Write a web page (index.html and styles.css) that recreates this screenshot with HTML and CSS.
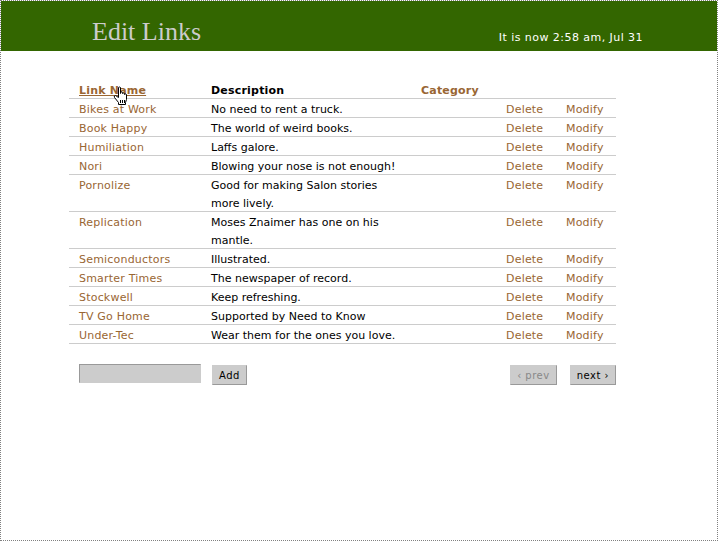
FILE: index.html
```html
<!DOCTYPE html>
<html>
<head>
<meta charset="utf-8">
<title>Edit Links</title>
<link rel="stylesheet" href="styles.css">
</head>
<body>
<div class="frame">
  <header class="top">
    <h1 class="title">Edit Links</h1>
    <div class="now">It is now 2:58 am, Jul 31</div>
  </header>
  <main class="content">
    <div class="table-wrap">
      <table class="links">
        <colgroup>
          <col class="c-name"><col class="c-desc"><col class="c-cat"><col class="c-del"><col class="c-mod">
        </colgroup>
        <thead>
          <tr>
            <th><span class="cell"><a class="sort" href="#">Link Name</a></span></th>
            <th class="plain"><span class="cell">Description</span></th>
            <th><span class="cell">Category</span></th>
            <th></th>
            <th></th>
          </tr>
        </thead>
        <tbody>
          <tr><td><span class="cell"><a href="#">Bikes at Work</a></span></td><td><span class="cell">No need to rent a truck.</span></td><td></td><td><span class="cell"><a href="#">Delete</a></span></td><td><span class="cell"><a href="#">Modify</a></span></td></tr>
          <tr><td><span class="cell"><a href="#">Book Happy</a></span></td><td><span class="cell">The world of weird books.</span></td><td></td><td><span class="cell"><a href="#">Delete</a></span></td><td><span class="cell"><a href="#">Modify</a></span></td></tr>
          <tr><td><span class="cell"><a href="#">Humiliation</a></span></td><td><span class="cell">Laffs galore.</span></td><td></td><td><span class="cell"><a href="#">Delete</a></span></td><td><span class="cell"><a href="#">Modify</a></span></td></tr>
          <tr><td><span class="cell"><a href="#">Nori</a></span></td><td><span class="cell">Blowing your nose is not enough!</span></td><td></td><td><span class="cell"><a href="#">Delete</a></span></td><td><span class="cell"><a href="#">Modify</a></span></td></tr>
          <tr><td><span class="cell"><a href="#">Pornolize</a></span></td><td><span class="cell">Good for making Salon stories more lively.</span></td><td></td><td><span class="cell"><a href="#">Delete</a></span></td><td><span class="cell"><a href="#">Modify</a></span></td></tr>
          <tr><td><span class="cell"><a href="#">Replication</a></span></td><td><span class="cell">Moses Znaimer has one on his mantle.</span></td><td></td><td><span class="cell"><a href="#">Delete</a></span></td><td><span class="cell"><a href="#">Modify</a></span></td></tr>
          <tr><td><span class="cell"><a href="#">Semiconductors</a></span></td><td><span class="cell">Illustrated.</span></td><td></td><td><span class="cell"><a href="#">Delete</a></span></td><td><span class="cell"><a href="#">Modify</a></span></td></tr>
          <tr><td><span class="cell"><a href="#">Smarter Times</a></span></td><td><span class="cell">The newspaper of record.</span></td><td></td><td><span class="cell"><a href="#">Delete</a></span></td><td><span class="cell"><a href="#">Modify</a></span></td></tr>
          <tr><td><span class="cell"><a href="#">Stockwell</a></span></td><td><span class="cell">Keep refreshing.</span></td><td></td><td><span class="cell"><a href="#">Delete</a></span></td><td><span class="cell"><a href="#">Modify</a></span></td></tr>
          <tr><td><span class="cell"><a href="#">TV Go Home</a></span></td><td><span class="cell">Supported by Need to Know</span></td><td></td><td><span class="cell"><a href="#">Delete</a></span></td><td><span class="cell"><a href="#">Modify</a></span></td></tr>
          <tr><td><span class="cell"><a href="#">Under-Tec</a></span></td><td><span class="cell">Wear them for the ones you love.</span></td><td></td><td><span class="cell"><a href="#">Delete</a></span></td><td><span class="cell"><a href="#">Modify</a></span></td></tr>
        </tbody>
      </table>
      <svg class="cursor" width="17" height="19" viewBox="0 0 17 19" aria-hidden="true">
        <path d="M5.5 1.5 Q6.5 0.5 7.5 1.5 L7.5 7.5 L7.5 6.5 Q8.5 5.5 9.5 6.5 L9.5 7.5 Q10.5 6.5 11.5 7.5 L11.5 8.5 Q12.5 7.5 13.5 8.5 L13.5 13.5 L12.5 16.5 L12.5 18.5 L5.5 18.5 L5.5 16.5 L1.5 11.5 Q0.5 9.5 2.5 9.5 L5.5 11.5 Z" fill="#fff" stroke="#000" stroke-width="1"/>
        <path d="M7.5 14 V17 M9.5 14 V17 M11.5 14 V17" stroke="#000" stroke-width="1" fill="none"/>
      </svg>
    </div>
    <div class="controls">
      <div class="add">
        <input class="field" type="text" aria-label="New link">
        <button class="btn" type="button">Add</button>
      </div>
      <div class="pager">
        <button class="btn off" type="button">&lsaquo; prev</button>
        <button class="btn" type="button">next &rsaquo;</button>
      </div>
    </div>
  </main>
</div>
</body>
</html>
```

FILE: styles.css
```css
html, body {
  margin: 0;
  padding: 0;
  background: #fff;
}

.frame {
  width: 718px;
  height: 541px;
  box-sizing: border-box;
  border: 1px dotted #808080;
  font-family: "DejaVu Sans", Verdana, sans-serif;
  font-size: 11px;
  color: #000;
}

.top {
  height: 50px;
  background: #336600;
  display: flex;
  align-items: flex-start;
  justify-content: space-between;
  padding: 0 74px 0 91px;
  box-sizing: border-box;
}

.title {
  margin: 0;
  padding-top: 16px;
  font-family: "Liberation Serif", "Times New Roman", serif;
  font-weight: normal;
  font-size: 26px;
  line-height: 30px;
  color: #cccccc;
}

.now {
  padding-top: 30px;
  line-height: 14px;
  color: #fff;
  font-size: 11px;
  letter-spacing: 0.45px;
}

.content {
  padding: 29px 0 0 68px;
}

.table-wrap {
  position: relative;
  width: 547px;
}

.links {
  width: 547px;
  border-collapse: collapse;
  table-layout: fixed;
}

.c-name { width: 132px; }
.c-desc { width: 210px; }
.c-cat { width: 85px; }
.c-del { width: 60px; }
.c-mod { width: 60px; }

.links th,
.links td {
  padding: 0 0 0 10px;
  line-height: 18px;
  text-align: left;
  vertical-align: top;
  border-bottom: 1px solid #cccccc;
  font-size: 11px;
}

.cell {
  display: block;
  margin: 2px 0 -2px;
}

.links th {
  font-weight: bold;
  color: #996633;
  letter-spacing: 0.2px;
}

.links th.plain {
  color: #000;
}

.links td a {
  letter-spacing: 0.2px;
}

.links td:nth-child(2) {
  padding-right: 2px;
}

.links a {
  color: #996633;
  text-decoration: none;
}

.links a.sort {
  text-decoration: underline;
}

.cursor {
  position: absolute;
  left: 44px;
  top: 6px;
}

.controls {
  display: flex;
  justify-content: space-between;
  align-items: flex-start;
  width: 537px;
  margin: 20px 0 0 10px;
}

.add,
.pager {
  display: flex;
  align-items: flex-start;
}

.field {
  width: 122px;
  height: 19px;
  box-sizing: border-box;
  margin: 0;
  padding: 0;
  background: #cccccc;
  border: 1px solid #cccccc;
  border-top-color: #999999;
  border-left-color: #999999;
}

.btn {
  height: 20px;
  margin: 1px 0 0 11px;
  padding: 0 6px;
  box-sizing: border-box;
  background: #cccccc;
  border: 1px solid #cccccc;
  border-right-color: #999999;
  border-bottom-color: #999999;
  font-family: "DejaVu Sans", Verdana, sans-serif;
  font-size: 10px;
  color: #000;
  letter-spacing: 0.5px;
}

.pager .btn {
  margin-left: 13px;
}

.btn.off {
  color: #888888;
}
```
